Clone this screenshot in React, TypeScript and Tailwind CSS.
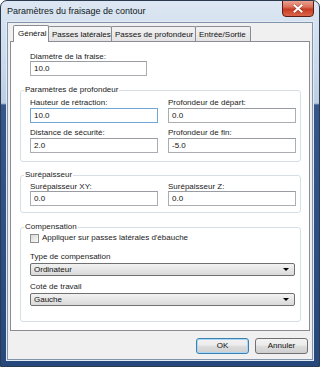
import React from 'react'

const font = { fontFamily: '"Liberation Sans", Arial, sans-serif' }

function Field({ value, width, focused = false }: { value: string; width: string; focused?: boolean }) {
  return (
    <div
      className={`${width} h-[15px] bg-white border flex items-center pl-[3px] text-[8px] text-[#111] ${
        focused ? 'border-[#6fa7d9]' : 'border-[#abadb3] border-t-[#9a9ca3]'
      }`}
    >
      {value}
    </div>
  )
}

function Label({ children }: { children: React.ReactNode }) {
  return <div className="h-[9px] leading-[9px] text-[8px] text-[#222] whitespace-nowrap">{children}</div>
}

function Group({ title, children, className = '' }: { title: string; children: React.ReactNode; className?: string }) {
  return (
    <div className={`relative ml-[9px] mr-[8px] border border-[#d5dfe5] rounded-[3px] ${className}`}>
      <span className="absolute -top-[6px] left-[3px] bg-white px-[1px] h-[10px] leading-[10px] text-[8px] text-[#222] whitespace-nowrap">
        {title}
      </span>
      {children}
    </div>
  )
}

function Select({ value }: { value: string }) {
  return (
    <div className="w-[265px] h-[13px] border border-[#707070] rounded-[2px] bg-gradient-to-b from-[#f2f2f2] to-[#dadada] flex items-center justify-between pl-[3px] pr-[5px] text-[8px] text-[#111]">
      <span>{value}</span>
      <span className="w-0 h-0 border-l-[3px] border-r-[3px] border-t-[3px] border-l-transparent border-r-transparent border-t-black" />
    </div>
  )
}

export default function App() {
  const tabs = ['Passes latérales', 'Passes de profondeur', 'Entrée/Sortie']
  const tabWidths = ['w-[64px]', 'w-[85px]', 'w-[56px]']

  return (
    <div
      className="w-[320px] h-[367px] flex flex-col border border-[#2c3a4f] rounded-t-[7px] overflow-hidden bg-[linear-gradient(to_bottom,#dde7f3_0%,#c9d8ea_18%,#bdcee3_28%,#36578b_28.5%,#27487c_100%)]"
      style={font}
    >
      {/* Title bar */}
      <div className="h-[21px] flex items-start justify-between shrink-0">
        <div className="pl-[6px] pt-[5px] text-[9px] leading-[11px] text-[#101820]">Paramètres du fraisage de contour</div>
        <div className="mr-[5px] -mt-px w-[32px] h-[17px] rounded-b-[4px] border border-[#5a1d16] bg-[linear-gradient(to_bottom,#eaa290_0%,#dc6e58_40%,#c83b25_55%,#d9654a_100%)] flex items-center justify-center">
          <svg width="10" height="9" viewBox="0 0 10 9">
            <path d="M1.5 1.5 L8.5 7.5 M8.5 1.5 L1.5 7.5" stroke="#3a0f0a" strokeWidth="3" strokeLinecap="square" opacity="0.35" />
            <path d="M1.5 1.5 L8.5 7.5 M8.5 1.5 L1.5 7.5" stroke="#fff" strokeWidth="2" strokeLinecap="square" />
          </svg>
        </div>
      </div>

      {/* Client area */}
      <div className="flex-1 mx-[6px] mb-[6px] border border-[#8294ac] ring-1 ring-[#e3ebf5] bg-[#f0f0f0] flex flex-col px-[2px] pt-[2px]">
        {/* Tabs */}
        <div className="flex items-end h-[16px] pl-[3px]">
          <div className="relative z-10 w-[36px] h-[17px] -mb-px bg-white border border-b-0 border-[#898c95] rounded-t-[2px] text-[8px] text-[#111] pl-[4px] pt-[3px] leading-[9px]">
            Général
          </div>
          {tabs.map((t, i) => (
            <div
              key={t}
              className={`${tabWidths[i]} h-[15px] -ml-px first:ml-0 border border-b-0 border-[#898c95] rounded-t-[2px] bg-gradient-to-b from-[#f2f2f2] to-[#e3e3e3] text-[8px] text-[#111] pl-[3px] pt-[3px] leading-[9px] whitespace-nowrap`}
            >
              {t}
            </div>
          ))}
        </div>

        {/* Panel */}
        <div className="w-[300px] bg-white border border-[#898c95] flex flex-col pt-[10px] pb-[8px]">
          <div className="ml-[19px]">
            <Label>Diamètre de la fraise:</Label>
            <Field value="10.0" width="w-[117px]" />
          </div>

          <Group title="Paramètres de profondeur" className="mt-[14px] pl-[9px] pt-[7px] pb-[8px]">
            <div className="grid grid-cols-[128px_128px] gap-x-[10px]">
              <Label>Hauteur de rétraction:</Label>
              <Label>Profondeur de départ:</Label>
              <div className="mt-px">
                <Field value="10.0" width="w-[128px]" focused />
              </div>
              <div className="mt-px">
                <Field value="0.0" width="w-[128px]" />
              </div>
              <div className="mt-[5px]">
                <Label>Distance de sécurité:</Label>
              </div>
              <div className="mt-[5px]">
                <Label>Profondeur de fin:</Label>
              </div>
              <div className="mt-px">
                <Field value="2.0" width="w-[128px]" />
              </div>
              <div className="mt-px">
                <Field value="-5.0" width="w-[128px]" />
              </div>
            </div>
          </Group>

          <Group title="Surépaisseur" className="mt-[13px] pl-[9px] pt-[6px] pb-[6px]">
            <div className="grid grid-cols-[128px_128px] gap-x-[10px]">
              <Label>Surépaisseur XY:</Label>
              <Label>Surépaisseur Z:</Label>
              <Field value="0.0" width="w-[128px]" />
              <Field value="0.0" width="w-[128px]" />
            </div>
          </Group>

          <Group title="Compensation" className="mt-[14px] pl-[9px] pt-[5px] pb-[15px]">
            <div className="flex items-center h-[10px] gap-[3px]">
              <span className="w-[9px] h-[9px] border border-[#8f8f8f] bg-gradient-to-br from-[#d8d8d8] to-[#fafafa]" />
              <span className="text-[8px] text-[#222] whitespace-nowrap">Appliquer sur passes latérales d'ébauche</span>
            </div>
            <div className="mt-[9px]">
              <Label>Type de compensation</Label>
            </div>
            <div className="mt-[2px]">
              <Select value="Ordinateur" />
            </div>
            <div className="mt-[6px]">
              <Label>Coté de travail</Label>
            </div>
            <div className="mt-[2px]">
              <Select value="Gauche" />
            </div>
          </Group>
        </div>

        {/* Buttons */}
        <div className="flex justify-end gap-[6px] mt-[7px] pr-[2px]">
          <button className="w-[53px] h-[16px] rounded-[3px] border border-[#3c7fb1] bg-[linear-gradient(to_bottom,#f2f2f2_0%,#ebebeb_45%,#dddddd_50%,#cfcfcf_100%)] text-[8px] text-[#111] shadow-[inset_0_0_0_1px_#a8d8f5]">
            OK
          </button>
          <button className="w-[53px] h-[16px] rounded-[3px] border border-[#707070] bg-[linear-gradient(to_bottom,#f2f2f2_0%,#ebebeb_45%,#dddddd_50%,#cfcfcf_100%)] text-[8px] text-[#111]">
            Annuler
          </button>
        </div>
      </div>
    </div>
  )
}
